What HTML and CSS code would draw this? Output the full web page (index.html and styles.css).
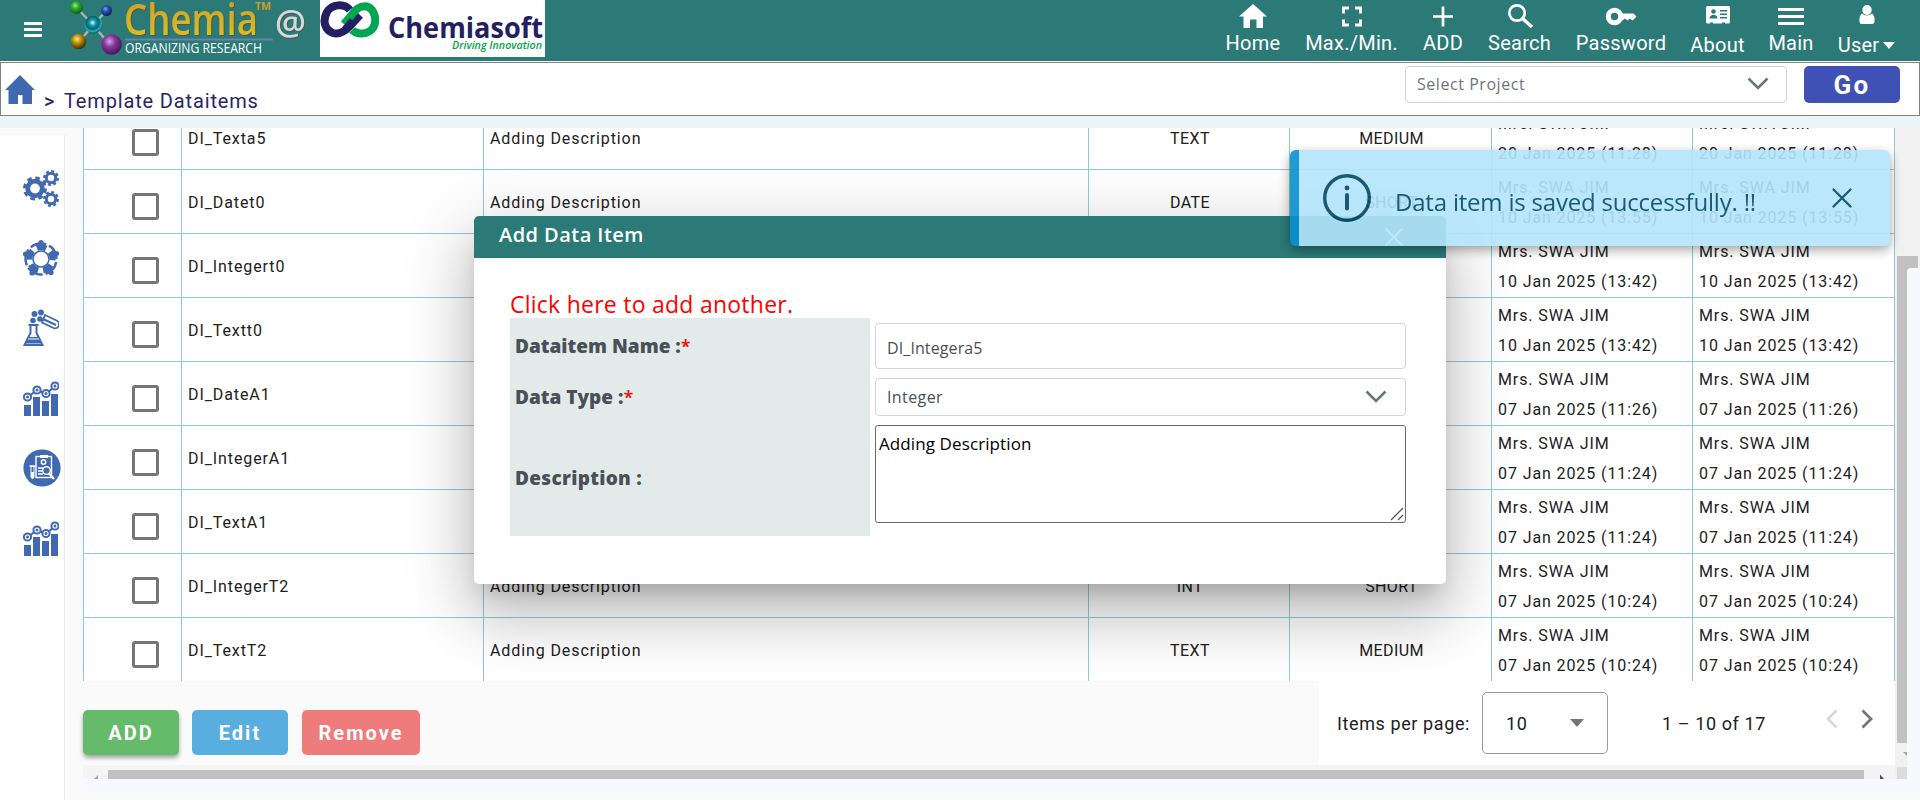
FILE: index.html
```html
<!DOCTYPE html>
<html lang="en">
<head>
<meta charset="utf-8">
<title>Template Dataitems</title>
<link rel="stylesheet" href="styles.css">
</head>
<body>
<svg width="0" height="0" class="defs" aria-hidden="true">
  <defs>
    <radialGradient id="gGreen" cx=".4" cy=".35" r=".65"><stop offset="0" stop-color="#8ff08a"/><stop offset=".4" stop-color="#2fae2c"/><stop offset="1" stop-color="#0d5a12"/></radialGradient>
    <radialGradient id="gBlue" cx=".4" cy=".35" r=".65"><stop offset="0" stop-color="#7aa5ee"/><stop offset=".4" stop-color="#2453a8"/><stop offset="1" stop-color="#0b2358"/></radialGradient>
    <radialGradient id="gCyan" cx=".45" cy=".4" r=".6"><stop offset="0" stop-color="#c9ffff"/><stop offset=".3" stop-color="#1597a8"/><stop offset=".6" stop-color="#0b5f6e"/><stop offset=".8" stop-color="#1fb4c4"/><stop offset="1" stop-color="#0c5560"/></radialGradient>
    <radialGradient id="gGold" cx=".4" cy=".35" r=".65"><stop offset="0" stop-color="#ffe98a"/><stop offset=".4" stop-color="#bd930c"/><stop offset="1" stop-color="#3f2f00"/></radialGradient>
    <radialGradient id="gPurple" cx=".4" cy=".35" r=".7"><stop offset="0" stop-color="#d9a3ea"/><stop offset=".4" stop-color="#84379c"/><stop offset="1" stop-color="#3d1250"/></radialGradient>
    <linearGradient id="gText" x1="0" y1="0" x2="0" y2="1"><stop offset="0" stop-color="#c99a22"/><stop offset="1" stop-color="#e0c52a"/></linearGradient>
    <symbol id="chart" viewBox="0 0 36 36">
      <g fill="#4169b2"><rect x="1" y="25" width="7" height="11"/><rect x="10" y="17" width="7" height="19"/><rect x="19" y="21" width="7" height="15"/><rect x="28" y="14" width="7" height="22"/></g>
      <g fill="#fff" stroke="#4169b2" stroke-width="2"><path d="M5 17 14 10 23 14 32 6" fill="none"/><circle cx="4.5" cy="17" r="3.6"/><circle cx="14" cy="10" r="3.6"/><circle cx="23" cy="13.5" r="3.6"/><circle cx="32" cy="6" r="3.6"/></g>
      <g fill="#4169b2"><circle cx="4.5" cy="17" r="1.5"/><circle cx="14" cy="10" r="1.5"/><circle cx="23" cy="13.5" r="1.5"/><circle cx="32" cy="6" r="1.5"/></g>
    </symbol>
  </defs>
</svg>

<header class="topbar">
  <svg class="burger" viewBox="0 0 18 16" width="18" height="16"><path d="M0 1.5h18M0 7.5h18M0 13.5h18" stroke="#fff" stroke-width="3"/></svg>
  <svg class="logo" width="245" height="61" viewBox="0 0 245 61">
    <path d="M12 8 28 25 42 10M14 42 28 25 46 46" stroke="#a9b3b3" stroke-width="2.4" fill="none"/>
    <circle cx="11.500" cy="7.500" r="6.500" fill="url(#gGreen)"/>
    <circle cx="41.500" cy="10.500" r="5.500" fill="url(#gBlue)"/>
    <circle cx="28.500" cy="24.500" r="9" fill="url(#gCyan)"/>
    <circle cx="13.500" cy="41.500" r="7.800" fill="url(#gGold)"/>
    <circle cx="46.500" cy="44.500" r="10.300" fill="url(#gPurple)"/>
    <text class="logo-name" x="59" y="34.500" textLength="134" lengthAdjust="spacingAndGlyphs">Chemia</text>
    <text class="logo-tm" x="190" y="10" textLength="16" lengthAdjust="spacingAndGlyphs">TM</text>
    <rect x="60" y="38.500" width="148" height="2" fill="#6f7fae"/>
    <text class="logo-sub" x="60" y="53" textLength="137" lengthAdjust="spacingAndGlyphs">ORGANIZING RESEARCH</text>
    <text class="logo-at" x="210" y="35" textLength="31" lengthAdjust="spacingAndGlyphs">@</text>
  </svg>
  <svg class="partner" width="225" height="57" viewBox="0 0 225 57">
    <rect width="225" height="57" fill="#fff"/>
    <g fill="none" stroke-width="8">
      <path d="M30 10 C24 3 12 4 7 12 C2 21 5 30 13 33 C20 35 25 31 29 27 L40 15" stroke="#241f63"/>
      <path d="M24 24 L35 11 C40 5 48 5 52 10 C57 17 56 27 50 31 C44 35 36 34 32 30" stroke="#00a651"/>
      <path d="M25 30 33 21" stroke="#241f63"/>
    </g>
    <text class="p-name" x="68" y="38" textLength="155" lengthAdjust="spacingAndGlyphs">Chemiasoft</text>
    <text class="p-sub" x="132" y="49" textLength="90" lengthAdjust="spacingAndGlyphs">Driving Innovation</text>
  </svg>
  <nav class="menu">
    <a class="m-home"><svg viewBox="0 0 28 24" width="28" height="24"><path d="M14 0 28 12.500H24V24H17.500V15.500H11V24H4.500V12.500H0z" fill="#fff"/></svg><span>Home</span></a>
    <a class="m-max"><svg viewBox="0 0 28 24" width="28" height="24"><path d="M5.500 9.500V4h5.500M17 4h5.500v5.500M22.500 15.500V21H17M11 21H5.500v-5.500" fill="none" stroke="#fff" stroke-width="3"/></svg><span>Max./Min.</span></a>
    <a class="m-add"><svg viewBox="0 0 28 24" width="28" height="24"><path d="M14 2.500v20M4 12.500h20" stroke="#fff" stroke-width="2.700"/></svg><span>ADD</span></a>
    <a class="m-search"><svg viewBox="0 0 28 24" width="28" height="24"><circle cx="11" cy="9" r="7.700" fill="none" stroke="#fff" stroke-width="2.700"/><path d="M16.500 14.500 26 23" stroke="#fff" stroke-width="3.400"/></svg><span>Search</span></a>
    <a class="m-pass"><svg viewBox="0 0 32 24" width="32" height="24"><circle cx="9.500" cy="12.500" r="6.200" fill="none" stroke="#fff" stroke-width="5"/><path d="M16 9.500h12.500l3 3-4 4-2.500-2-2.500 2-2.500-2-2 1.500h-3z" fill="#fff"/></svg><span>Password</span></a>
    <a class="m-about low"><svg viewBox="0 0 24 24" width="24" height="24"><rect y="2" width="24" height="17.500" rx="1.500" fill="#fff"/><path d="M4 18.500h3v1.500H4zM16 18.500h3v1.500h-3z" fill="#2b7a77"/><circle cx="7.500" cy="7.500" r="2.300" fill="#2b7a77"/><path d="M3.500 14.500c0-5 8-5 8 0zM14 6h7v1.500h-7zM14 9.500h7V11h-7zM14 13h7v1.500h-7z" fill="#2b7a77"/></svg><span>About</span></a>
    <a class="m-main"><svg viewBox="0 0 26 24" width="26" height="24"><path d="M0 5.500h26M0 12.500h26M0 19.500h26" stroke="#fff" stroke-width="2.800"/></svg><span>Main</span></a>
    <a class="m-user low"><svg viewBox="0 0 16 24" width="16" height="24"><ellipse cx="8" cy="6" rx="4.700" ry="5" fill="#fff"/><path d="M3 9.500c3 2.500 7 2.500 10 0 2 1.500 3 4 2.500 8.500q-.5 2-2.500 2H3q-2.500 0-2.500-2C0 13.500 1 11 3 9.500z" fill="#fff"/></svg><span>User<i class="caret"></i></span></a>
  </nav>
</header>

<section class="crumbs">
  <svg class="home" viewBox="0 0 30 30" width="30" height="30"><path d="M15 0 30 15H27V29H17.500V20H13V29H3.500V15H0z" fill="#4169b2"/></svg>
  <span class="sep">&gt;</span><span class="title">Template Dataitems</span>
  <div class="project"><span>Select Project</span><svg viewBox="0 0 22 14" width="22" height="14"><path d="M1.500 1.500 11 11 20.500 1.500" fill="none" stroke="#6c757d" stroke-width="2.600"/></svg></div>
  <button class="go">Go</button>
</section>

<div class="body">
  <aside class="side">
    <svg viewBox="0 0 36 38" width="36" height="38"><g fill="none" stroke="#4169b2"><circle cx="12" cy="19.500" r="7.300" stroke-width="4.800"/><circle cx="12" cy="19.500" r="10.500" stroke-width="3" stroke-dasharray="4.600 3.646"/><circle cx="28" cy="9" r="4.700" stroke-width="3"/><circle cx="28" cy="9" r="6.900" stroke-width="2.200" stroke-dasharray="3 2.419"/><circle cx="28" cy="30" r="4.700" stroke-width="3"/><circle cx="28" cy="30" r="6.900" stroke-width="2.200" stroke-dasharray="3 2.419"/></g></svg>
    <svg viewBox="0 0 36 38" width="36" height="38"><g fill="none" stroke="#4169b2"><circle cx="18" cy="20" r="15.500" stroke-width="2.500" stroke-dasharray="16.500 2.977" stroke-dashoffset="-3"/><circle cx="18" cy="20" r="11.700" stroke-width="6" stroke-dasharray="9.500 5.203" stroke-dashoffset="22.900"/><circle cx="18" cy="20" r="8" stroke-width="1.600"/></g><g fill="#4169b2"><circle cx="18" cy="3.500" r="2.600"/><circle cx="2.500" cy="15" r="2.600"/><circle cx="33.500" cy="14.500" r="2.600"/><circle cx="9" cy="34" r="2.600"/><circle cx="28" cy="33.500" r="2.600"/></g></svg>
    <svg viewBox="0 0 36 38" width="36" height="38"><g fill="#4169b2"><circle cx="11.500" cy="5" r="3"/><circle cx="18" cy="3.500" r="2.900"/><circle cx="10" cy="11.500" r="2.800"/><circle cx="17" cy="10" r="2.800"/><path d="M5 28h11l3 6.500H2z"/></g><path d="M5.500 16h10M7.500 16v8L1.500 36h18L13.500 24v-8" fill="none" stroke="#4169b2" stroke-width="2"/><path d="M5 30h11" stroke="#fff" stroke-width="1"/><path d="M22 6 33.500 11.500a4 4 0 0 1-3 7.500L19 13.500z" fill="none" stroke="#4169b2" stroke-width="1.800"/><path d="M20 10 33 16" stroke="#4169b2" stroke-width="2.200"/></svg>
    <svg viewBox="0 0 36 36" width="36" height="38"><use href="#chart"/></svg>
    <svg viewBox="0 0 38 38" width="38" height="38"><circle cx="19" cy="19" r="18.600" fill="#4169b2"/><g fill="none" stroke="#fff" stroke-width="1.400"><rect x="13" y="7.500" width="15.500" height="21"/><circle cx="20.500" cy="13" r="2.200"/><path d="M15 19h5M15 22h4M15 25h5M6.500 17h6"/><circle cx="23.500" cy="21.500" r="3.800" fill="#4169b2"/><path d="M26 24.500 31 30" stroke-width="2.200"/></g><path d="M7.500 17h4v11q-2 4-4 0zM17 6h8v3h-8z" fill="#fff"/><path d="M8.500 18h2v5h-2z" fill="#4169b2"/></svg>
    <svg viewBox="0 0 36 36" width="36" height="38"><use href="#chart"/></svg>
  </aside>

  <main class="main">
    <div class="tablewrap">
      <div class="table">
        <div class="row"><div><i class="box"></i></div><div>DI_Texta5</div><div>Adding Description</div><div class="c">TEXT</div><div class="c">MEDIUM</div><div class="who">Mrs. SWA JIM<br>20 Jan 2025 (11:28)</div><div class="who">Mrs. SWA JIM<br>20 Jan 2025 (11:28)</div></div>
        <div class="row"><div><i class="box"></i></div><div>DI_Datet0</div><div>Adding Description</div><div class="c">DATE</div><div class="c">SHORT</div><div class="who">Mrs. SWA JIM<br>10 Jan 2025 (13:55)</div><div class="who">Mrs. SWA JIM<br>10 Jan 2025 (13:55)</div></div>
        <div class="row"><div><i class="box"></i></div><div>DI_Integert0</div><div></div><div class="c"></div><div class="c"></div><div class="who">Mrs. SWA JIM<br>10 Jan 2025 (13:42)</div><div class="who">Mrs. SWA JIM<br>10 Jan 2025 (13:42)</div></div>
        <div class="row"><div><i class="box"></i></div><div>DI_Textt0</div><div></div><div class="c"></div><div class="c"></div><div class="who">Mrs. SWA JIM<br>10 Jan 2025 (13:42)</div><div class="who">Mrs. SWA JIM<br>10 Jan 2025 (13:42)</div></div>
        <div class="row"><div><i class="box"></i></div><div>DI_DateA1</div><div></div><div class="c"></div><div class="c"></div><div class="who">Mrs. SWA JIM<br>07 Jan 2025 (11:26)</div><div class="who">Mrs. SWA JIM<br>07 Jan 2025 (11:26)</div></div>
        <div class="row"><div><i class="box"></i></div><div>DI_IntegerA1</div><div></div><div class="c"></div><div class="c"></div><div class="who">Mrs. SWA JIM<br>07 Jan 2025 (11:24)</div><div class="who">Mrs. SWA JIM<br>07 Jan 2025 (11:24)</div></div>
        <div class="row"><div><i class="box"></i></div><div>DI_TextA1</div><div></div><div class="c"></div><div class="c"></div><div class="who">Mrs. SWA JIM<br>07 Jan 2025 (11:24)</div><div class="who">Mrs. SWA JIM<br>07 Jan 2025 (11:24)</div></div>
        <div class="row"><div><i class="box"></i></div><div>DI_IntegerT2</div><div>Adding Description</div><div class="c">INT</div><div class="c">SHORT</div><div class="who">Mrs. SWA JIM<br>07 Jan 2025 (10:24)</div><div class="who">Mrs. SWA JIM<br>07 Jan 2025 (10:24)</div></div>
        <div class="row"><div><i class="box"></i></div><div>DI_TextT2</div><div>Adding Description</div><div class="c">TEXT</div><div class="c">MEDIUM</div><div class="who">Mrs. SWA JIM<br>07 Jan 2025 (10:24)</div><div class="who">Mrs. SWA JIM<br>07 Jan 2025 (10:24)</div></div>
      </div>
    </div>
    <div class="foot">
      <div class="actions"><button class="add">ADD</button><button class="edit">Edit</button><button class="remove">Remove</button></div>
      <div class="pager">
        <span class="ipp">Items per page:</span>
        <div class="size"><span>10</span><i></i></div>
        <span class="range">1 – 10 of 17</span>
        <svg class="prev" viewBox="0 0 12 20" width="12" height="20"><path d="M10.500 1.500 2 10l8.500 8.500" fill="none" stroke="#d9d9d9" stroke-width="2.600"/></svg>
        <svg viewBox="0 0 12 20" width="12" height="20"><path d="M1.500 1.500 10 10l-8.500 8.500" fill="none" stroke="#757575" stroke-width="2.800"/></svg>
      </div>
    </div>
    <div class="hscroll"><svg width="25" height="11" viewBox="0 0 25 11"><path d="M11 11 15 7V11z" fill="#a3a3a3"/></svg><div class="thumb"></div><svg width="31" height="11" viewBox="0 0 31 11"><path d="M16 6.500 20 11H16z" fill="#505050"/></svg></div>
    <div class="strip"></div>
  </main>

  <div class="vscroll">
    <div class="vthumb"></div>
    <svg width="12" height="24" viewBox="0 0 12 24"><path d="M6 9h6v6z" fill="#a3a3a3"/></svg>
    <div class="corner"></div>
    <div class="sheet"></div>
  </div>
</div>

<div class="dialog">
  <div class="dhead"><h2>Add Data Item</h2><svg viewBox="0 0 20 20" width="20" height="20"><path d="M1.500 1.500 18.500 18.500M18.500 1.500 1.500 18.500" stroke="#fff" stroke-width="1.800"/></svg></div>
  <div class="dbody">
    <a class="again">Click here to add another.</a>
    <div class="form">
      <label class="f1"><span>Dataitem Name :</span><b>*</b></label><div class="input"><span>DI_Integera5</span></div>
      <label class="f2"><span>Data Type :</span><b>*</b></label><div class="select"><span>Integer</span><svg viewBox="0 0 22 14" width="22" height="14"><path d="M1.500 1.500 11 11 20.500 1.500" fill="none" stroke="#6c757d" stroke-width="2.600"/></svg></div>
      <label class="f3"><span>Description :</span></label><div class="area"><span>Adding Description</span><svg viewBox="0 0 14 14" width="14" height="14"><path d="M1 13 13 1M8 13l5-5" stroke="#555" stroke-width="1.300"/></svg></div>
    </div>
  </div>
</div>

<div class="toast">
  <svg viewBox="0 0 48 48" width="48" height="48"><circle cx="24" cy="24" r="22.300" fill="none" stroke="#044868" stroke-width="3.400"/><circle cx="24" cy="14" r="2.400" fill="#044868"/><path d="M24 21v13.500" stroke="#044868" stroke-width="4" stroke-linecap="round"/></svg>
  <span>Data item is saved successfully. !!</span>
  <svg class="tx" viewBox="0 0 20 20" width="20" height="20"><path d="M1.500 1.500 18.500 18.500M18.500 1.500 1.500 18.500" stroke="#044868" stroke-width="2.300" stroke-linecap="round"/></svg>
</div>
</body>
</html>
```
FILE: styles.css
```css
* { box-sizing: border-box; }
html { height: 800px; overflow: hidden; }
body { margin: 0; width: 1920px; height: 800px; overflow: hidden; background: #fafafa; font-family: Roboto, "Liberation Sans", sans-serif; color: #212121; }
.defs { position: absolute; }
svg { display: block; flex: none; }
button { border: 0; padding: 0; font: inherit; color: #fff; }

.topbar { display: flex; height: 61px; background: #2b7a77; margin-bottom: 1px; }
.burger { margin: 22px 0 0 24px; }
.logo { margin-left: 23px; overflow: visible; }
.logo-name { font: 600 43px "Open Sans", sans-serif; fill: url(#gText); filter: drop-shadow(1px 1px 0 #4b5a40); }
.logo-tm { font: 700 11px "Open Sans", sans-serif; fill: #d09a2c; }
.logo-sub { font: 14px "Open Sans", sans-serif; fill: #fff; }
.logo-at { font: 600 34px "Open Sans", sans-serif; fill: #d8d8d8; filter: drop-shadow(1px 1px 0 #4b5a50); }
.partner { margin-left: 10px; }
.p-name { font: 700 29px "Open Sans", sans-serif; fill: #241f63; }
.p-sub { font: italic 600 10.500px "Open Sans", sans-serif; fill: #00a651; }
.menu { display: flex; gap: 25px; margin-left: auto; padding: 4px 25px 0 0; color: #fff; font-size: 20px; letter-spacing: .25px; line-height: 24px; }
.menu a { display: flex; flex-direction: column; align-items: center; gap: 3px; white-space: nowrap; }
.menu .low { gap: 5px; }
.m-home { width: 54px; } .m-max { width: 93px; } .m-add { width: 40px; } .m-search { width: 63px; }
.m-pass { width: 90px; } .m-about { width: 53px; } .m-main { width: 44px; } .m-user { width: 57px; }
.caret { display: inline-block; border: 6px solid transparent; border-top: 7px solid #fff; border-bottom: 0; margin-left: 4px; vertical-align: 3px; }

.crumbs { display: flex; height: 54px; border: 1px solid #808080; background: #fff; color: #2a2466; font-size: 20px; }
.home { margin: 12px 0 0 4px; }
.sep { margin: 26px 0 0 9px; line-height: 24px; font-weight: 500; width: 20px; }
.title { margin-top: 26px; line-height: 24px; letter-spacing: .85px; }
.project { display: flex; align-items: center; justify-content: space-between; width: 382px; height: 37px; margin: 3px 17px 0 auto; padding: 0 17px 2px 11px; border: 1px solid #ced4da; border-radius: 4px; color: #6c757d; font: 16px "Open Sans", sans-serif; letter-spacing: .55px; }
.go { width: 96px; height: 37px; margin: 3px 19px 0 0; border-radius: 5px; background: #3f51b5; font-weight: 700; font-size: 26px; letter-spacing: 2.400px; }

.body { display: flex; height: 684px; border-top: 12px solid #ebf4f8; }
.side { width: 65px; height: 665px; margin-top: 7px; background: #fff; border-right: 1px solid #ebebeb; display: flex; flex-direction: column; gap: 32px; padding: 34px 0 0 23px; }
.main { width: 1812px; margin-left: 18px; }
.tablewrap { height: 553px; overflow: hidden; }
.table { margin-top: -22px; border-left: 1px solid #8ecfca; background: #fff; }
.row { display: grid; grid-template-columns: 98px 302px 605px 201px 202px 201px 202px; height: 64px; border-bottom: 1px solid #8ecfca; font-size: 16px; letter-spacing: .9px; line-height: 30px; white-space: nowrap; }
.row > div { border-right: 1px solid #8ecfca; padding: 18px 0 0 6px; }
.row > .c { text-align: center; padding-left: 2px; letter-spacing: .4px; }
.row > .who { padding-top: 3px; }
.box { display: block; width: 27px; height: 27px; border: 3px solid #757575; border-radius: 3px; margin: 5px 0 0 42px; }

.foot { display: flex; height: 84px; }
.actions { display: flex; padding-top: 29px; font-weight: 700; font-size: 20px; }
.actions button { height: 45px; border-radius: 5px; letter-spacing: 2px; }
.add { width: 96px; background: #66bb6a; box-shadow: 0 3px 4px rgba(0,0,0,.35); }
.edit { width: 96px; background: #58afdf; margin: 0 14px 0 13px; }
.remove { width: 118px; background: #ed7c7a; }
.pager { display: flex; align-items: center; width: 576px; margin-left: auto; background: #fff; font-size: 18px; letter-spacing: .6px; white-space: nowrap; padding-left: 18px; }
.ipp { width: 145px; }
.size { display: flex; align-items: center; justify-content: space-between; width: 126px; height: 62px; border: 1px solid #999; border-radius: 5px; padding: 0 23px; }
.size i { border: 7px solid transparent; border-top: 8px solid #757575; border-bottom: 0; }
.range { width: 164px; margin-left: 54px; }
.prev { margin-right: 23px; }
.pager > svg { margin-bottom: 8px; }
.hscroll { display: flex; height: 14px; padding-top: 3px; background: #f4f4f4; }
.hscroll .thumb { flex: 1; margin-top: 2px; background: #c1c1c1; }
.strip { height: 14px; width: 1837px; background: #f7f9fc; border-radius: 5px 0 0 5px; position: relative; }

.vscroll { width: 25px; height: 651px; background: #f1f1f1; padding: 128px 0 0 2px; position: relative; }
.vthumb { width: 21px; height: 487px; background: #c1c1c1; }
.corner { width: 10px; height: 12px; background: #dcdcdc; }
.sheet { position: absolute; left: 12px; right: 0; top: 140px; bottom: 0; background: #f7f9fc; border-radius: 4px 0 0 0; }

.dialog { position: absolute; left: 474px; top: 216px; width: 972px; height: 368px; border-radius: 5px; background: #fff; box-shadow: 0 16px 22px -10px rgba(0,0,0,.2), 0 36px 57px 4px rgba(0,0,0,.14), 0 14px 69px 12px rgba(0,0,0,.12); font-family: "Open Sans", sans-serif; }
.dhead { display: flex; justify-content: space-between; height: 42px; padding: 11px 42px 0 25px; background: #2b7a77; border-radius: 5px 5px 0 0; color: #fff; }
.dhead h2 { margin: -5px 0 0; font-size: 20px; line-height: 26px; font-weight: 600; letter-spacing: .45px; }
.dbody { padding: 29px 40px 0 36px; }
.again { display: block; height: 31px; line-height: 34px; font-size: 23px; letter-spacing: .25px; color: #f00; }
.form { display: grid; grid-template-columns: 360px 531px; column-gap: 5px; grid-template-rows: 56px 46px 116px; }
.form label { display: flex; align-items: center; background: #e2ebea; padding-left: 5px; font-weight: 800; font-size: 19px; color: #495057; }
.form label b { color: #f00; font-weight: 600; font-size: 18px; }
.f3 { letter-spacing: .3px; }
.input, .select { display: flex; align-items: center; justify-content: space-between; border: 1px solid #ced4da; border-radius: 4px; font-size: 16px; color: #495057; padding: 0 18px 0 11px; letter-spacing: .1px; }
.select { letter-spacing: .4px; }
.input { height: 46px; margin-top: 5px; padding-top: 3px; }
.select { height: 38px; margin-top: 4px; }
.area { position: relative; height: 98px; margin-top: 5px; border: 1px solid #6b6b6b; border-radius: 3px; padding: 5px 3px; font-size: 17px; line-height: 26px; letter-spacing: .1px; color: #000; }
.area svg { position: absolute; right: 1px; bottom: 1px; }

.toast { position: absolute; left: 1290px; top: 150px; width: 600px; height: 96px; display: flex; padding: 24px 38px 0 24px; border-left: 9px solid #0891cf; border-radius: 6px; background: #b3e5fc; opacity: .9; box-shadow: 0 4px 12px rgba(0,0,0,.4); color: #044868; font: 24px "Open Sans", sans-serif; letter-spacing: -.2px; }
.toast span { margin: 9px 0 0 24px; line-height: 38px; white-space: nowrap; }
.tx { margin: 14px 0 0 auto; }
```
